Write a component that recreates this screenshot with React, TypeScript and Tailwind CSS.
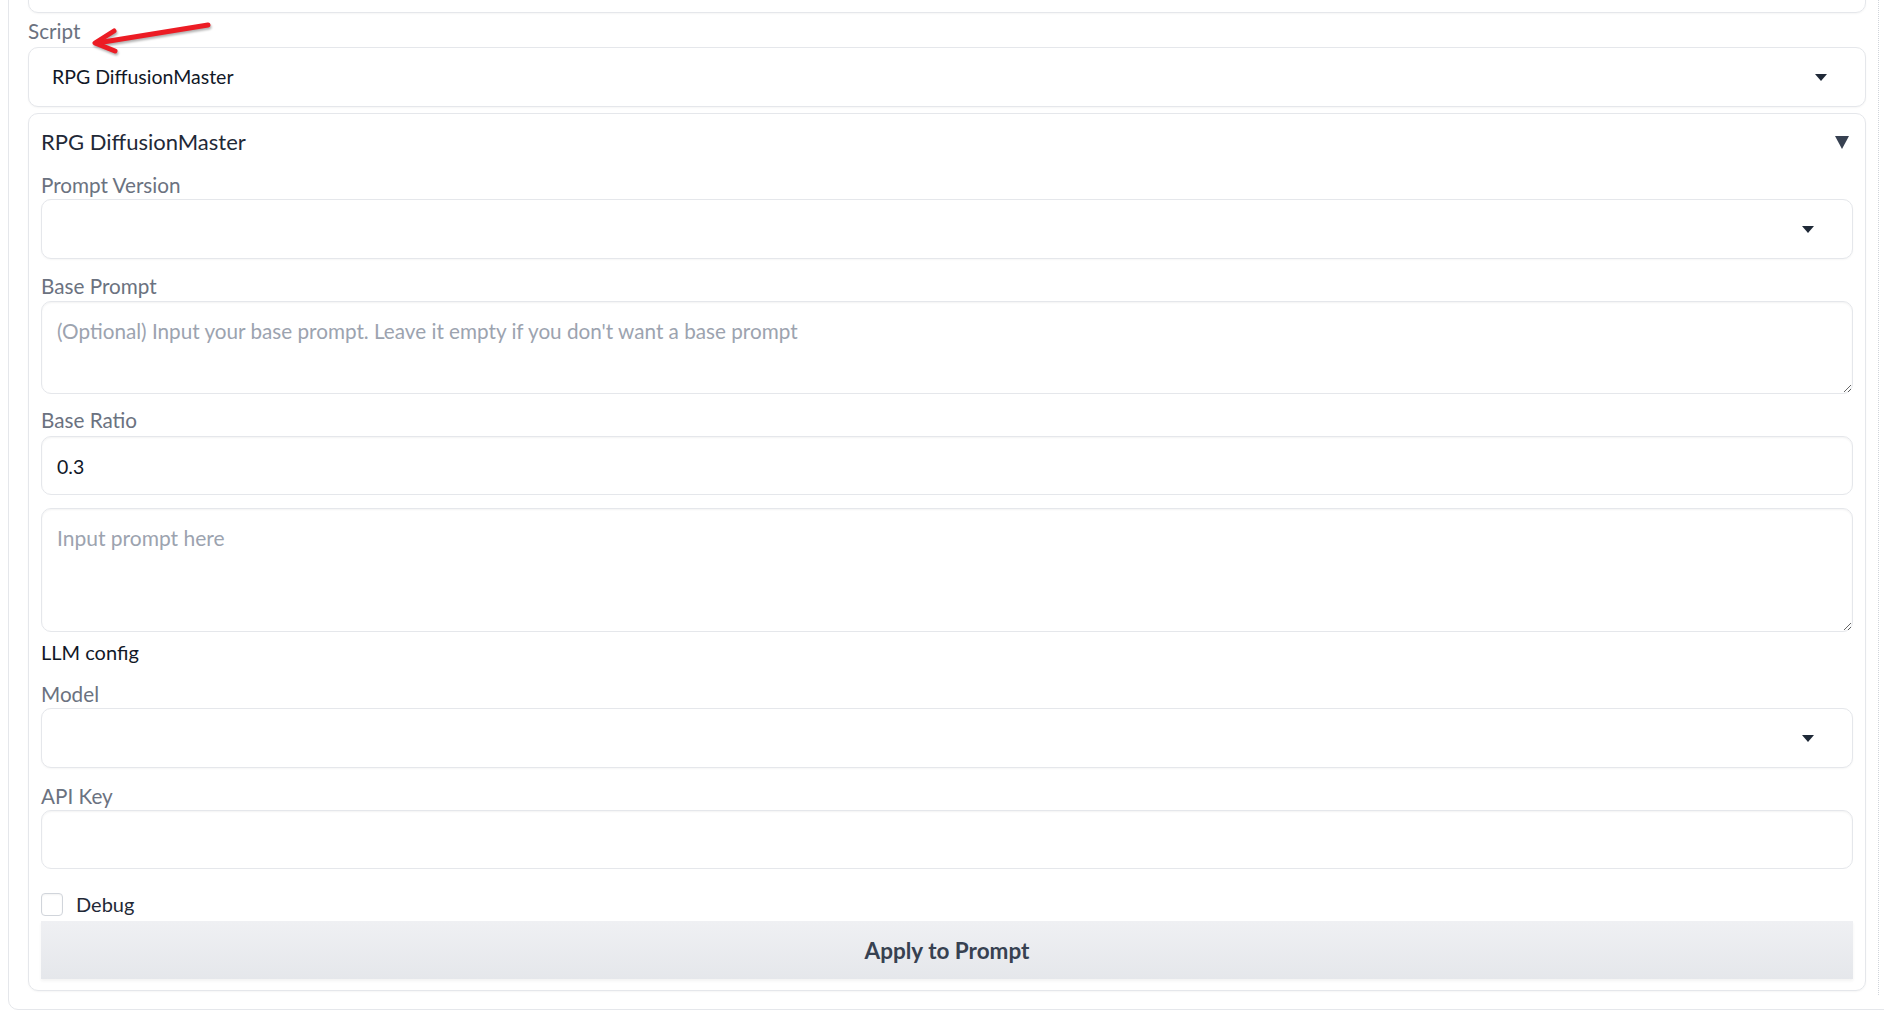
import React from 'react'

function Caret() {
  return (
    <svg width="12" height="7" viewBox="0 0 12 7" className="shrink-0">
      <polygon points="0,0 12,0 6,7" fill="#1f2937" />
    </svg>
  )
}

function Label({ children, className = '' }: { children: React.ReactNode; className?: string }) {
  return <div className={`text-[20.7px] leading-[22px] text-[#6b7280] ${className}`}>{children}</div>
}

function Dropdown({ value, className = '' }: { value?: string; className?: string }) {
  return (
    <div className={`flex h-[60px] items-center justify-between rounded-[10px] border border-[#e5e7eb] bg-white pr-[38px] shadow-[0_1px_2px_rgba(0,0,0,0.04)] ${className}`}>
      <span className="text-[19.5px] text-[#111827]">{value}</span>
      <Caret />
    </div>
  )
}

export default function App() {
  return (
    <div className="relative h-[1022px] w-[1884px] overflow-hidden bg-white font-[Lato,sans-serif]">
      {/* outer block, top and right edges run off screen */}
      <div className="-mt-[40px] ml-[8px] w-[1900px] rounded-[10px] border border-[#e5e7eb] pb-[18px] pl-[19px] pt-[12px]">
        <div className="w-[1838px]">
          <div className="h-[40px] rounded-[10px] border border-[#e5e7eb] shadow-[0_1px_2px_rgba(0,0,0,0.04)]" />

          <Label className="mt-[7px] mb-[5px]">Script</Label>
          <Dropdown value="RPG DiffusionMaster" className="pl-[23px]" />

          {/* accordion */}
          <div className="mt-[6px] rounded-[10px] border border-[#e5e7eb] px-[12px] pb-[11px] pt-[14px] shadow-[0_1px_2px_rgba(0,0,0,0.04)]">
            <div className="flex h-[28px] items-center justify-between">
              <span className="text-[22px] leading-[28px] text-[#1f2937]">RPG DiffusionMaster</span>
              <svg width="14" height="13" viewBox="0 0 14 13" className="mr-[4px]">
                <polygon points="0,0 14,0 7,13" fill="#374151" />
              </svg>
            </div>

            <Label className="mt-[18px] mb-[3px]">Prompt Version</Label>
            <Dropdown />

            <Label className="mt-[16px] mb-[4px]">Base Prompt</Label>
            <textarea
              className="block h-[93px] w-full resize-y rounded-[10px] border border-[#e5e7eb] px-[15px] py-[15px] text-[20.7px] leading-[28px] text-[#111827] shadow-[inset_0_1px_2px_rgba(0,0,0,0.05)] outline-none placeholder:text-[#9ca3af]"
              placeholder="(Optional) Input your base prompt. Leave it empty if you don't want a base prompt"
            />

            <Label className="mt-[15px] mb-[5px]">Base Ratio</Label>
            <input
              className="block h-[59px] w-full rounded-[10px] border border-[#e5e7eb] px-[15px] pt-[2px] text-[19.5px] text-[#111827] shadow-[inset_0_1px_2px_rgba(0,0,0,0.05)] outline-none"
              defaultValue="0.3"
            />

            <textarea
              className="mt-[13px] block h-[124px] w-full resize-y rounded-[10px] border border-[#e5e7eb] px-[15px] py-[15px] text-[21px] leading-[28px] text-[#111827] shadow-[inset_0_1px_2px_rgba(0,0,0,0.05)] outline-none placeholder:text-[#9ca3af]"
              placeholder="Input prompt here"
            />

            <div className="mt-[9px] text-[20px] leading-[22px] text-[#111827]">LLM config</div>

            <Label className="mt-[20px] mb-[3px]">Model</Label>
            <Dropdown />

            <Label className="mt-[17px] mb-[3px]">API Key</Label>
            <input
              type="password"
              className="block h-[59px] w-full rounded-[10px] border border-[#e5e7eb] px-[15px] text-[19px] shadow-[inset_0_1px_2px_rgba(0,0,0,0.05)] outline-none"
            />

            <label className="mt-[24px] flex h-[22px] items-center gap-[13px]">
              <span className="h-[23px] w-[22px] rounded-[4px] border border-[#d1d5db] bg-white shadow-[inset_0_1px_2px_rgba(0,0,0,0.05)]" />
              <span className="text-[20px] text-[#1f2937]">Debug</span>
            </label>

            <button className="mt-[6px] flex h-[58px] w-full items-center justify-center bg-gradient-to-b from-[#eff0f3] to-[#e5e7eb] pt-[1px] text-[22.5px] font-bold text-[#374151] shadow-[0_2px_3px_rgba(0,0,0,0.05)]">
              Apply to Prompt
            </button>
          </div>
        </div>
      </div>

      {/* dotted resize guide on the right */}
      <div className="absolute left-[1878px] top-0 h-[995px] border-l border-dotted border-[#d1d5db]" />

      {/* red annotation arrow */}
      <svg className="absolute left-0 top-0 drop-shadow-[1px_2px_1px_rgba(0,0,0,0.3)]" width="230" height="70" viewBox="0 0 230 70">
        <g stroke="#ec1c24" strokeWidth="5" strokeLinecap="round" strokeLinejoin="round" fill="none">
          <line x1="208" y1="25" x2="97" y2="43" />
          <polyline points="114,31 95,43 115,51" />
        </g>
      </svg>
    </div>
  )
}
